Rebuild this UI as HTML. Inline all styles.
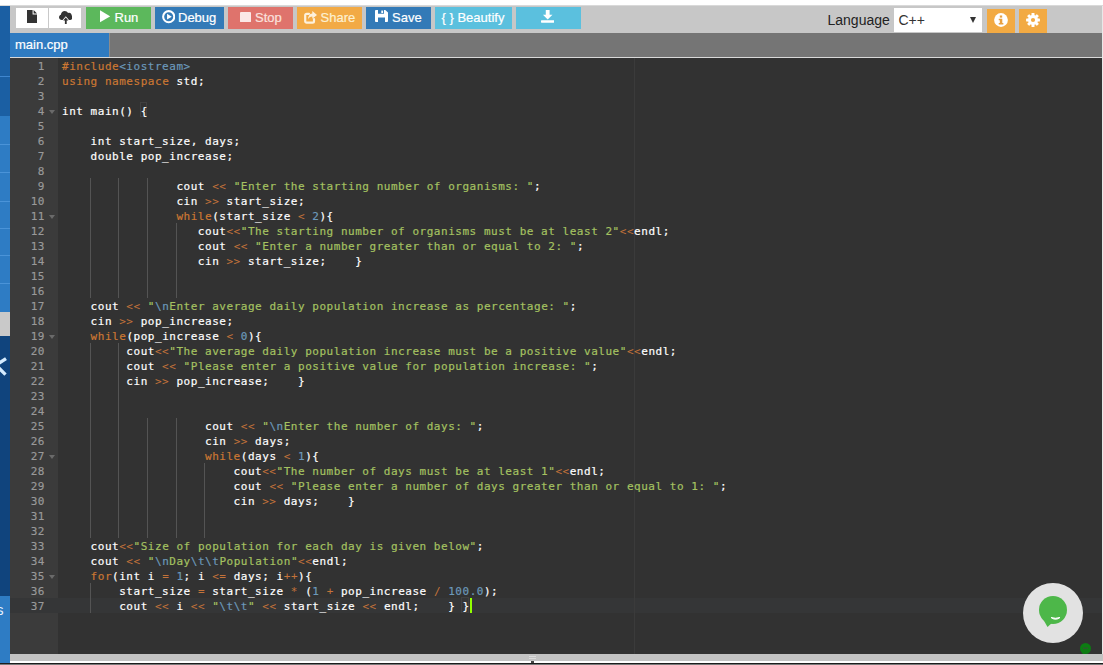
<!DOCTYPE html>
<html><head><meta charset="utf-8"><title>main.cpp</title>
<style>
html,body{margin:0;padding:0;}
body{width:1103px;height:665px;overflow:hidden;background:#fff;position:relative;font-family:"Liberation Sans",sans-serif;}
.abs{position:absolute;}
#toolbar{left:10px;top:5px;width:1092px;height:28px;background:#c7c7c7;}
#topshade{left:0;top:5px;width:1103px;height:1px;background:#d9d9d9;z-index:5;}
#side{left:0;top:6px;width:10px;height:657px;background:#1b5fa3;overflow:hidden;}
#side div{position:absolute;left:0;width:10px;}
#tabbar{left:10px;top:33px;width:1092px;height:24px;background:#757575;}
#tab{left:0;top:0;width:99px;height:24px;background:#2f7bc1;box-shadow:1px 0 0 #8c8c8c;color:#fff;font-size:13px;line-height:24px;}
#tab span{position:absolute;left:5px;top:0px;-webkit-text-stroke:0.2px;}
#tabline{left:10px;top:57px;width:1092px;height:1px;background:#d9d9d9;}
#editor{left:10px;top:58px;width:1092px;height:596px;background:#323232;overflow:hidden;}
#gutter{left:0;top:0;width:48px;height:596px;background:#3b3b3b;color:#999;}
#content{left:48px;top:0;width:1044px;height:596px;}
.mono,.ln,.gn{font-family:"DejaVu Sans Mono","Liberation Mono",monospace;font-size:11px;line-height:17px;height:15px;letter-spacing:0.528px;-webkit-text-stroke:0.18px;white-space:pre;}
.ln{color:#fff;padding-left:4px;position:relative;}
.gn{text-align:right;padding-right:13px;position:relative;}
.fold{position:absolute;right:3px;top:6.5px;width:0;height:0;border-left:3.5px solid transparent;border-right:3.5px solid transparent;border-top:4px solid #6a6a6a;}
.k{color:#CC7833}.o{color:#c4733a;-webkit-text-stroke:0}.s{color:#A5C261}.c{color:#6C99BB}
.gd{position:absolute;width:1px;background:#545454;}
#active{left:0;top:540px;width:1092px;height:15px;background:#353637;}
#pm{left:576px;top:0;width:1px;height:596px;background:#3b3b3b;}
#cursor{left:411.5px;top:540px;width:2px;height:15px;background:#91FF00;}
.btn{position:absolute;top:2px;height:22px;color:#fff;font-size:13px;line-height:22px;white-space:nowrap;-webkit-text-stroke:0.2px;}
.btn svg{position:absolute;}
.btn span{position:absolute;top:0;}
#bottomgray{left:10px;top:654px;width:1093px;height:7px;background:#c3c3c3;}
#bottomwhite{left:10px;top:661px;width:1093px;height:2px;background:#fff;}
#bottomdark{left:0;top:663px;width:1103px;height:1px;background:#1c1c1c;}
#bottomdark2{left:0;top:664px;width:1103px;height:1px;background:#7a7a7a;}
#rightedge{left:1102px;top:5px;width:1px;height:656px;background:#e8e8e8;}
</style></head><body>
<div id="topshade" class="abs"></div>
<div id="toolbar" class="abs">
  <!-- file group -->
  <div class="abs" style="left:6px;top:3px;width:65px;height:20px;background:#fff;"></div>
  <div class="abs" style="left:38px;top:3px;width:1px;height:20px;background:#c9c9c9;"></div>
  <svg class="abs" style="left:17px;top:5px" width="10" height="13" viewBox="0 0 10 13"><path d="M0 0H5.6V4.4H10V13H0Z M6.6 0L10 3.400H6.600Z" fill="#333"/></svg>
  <svg class="abs" style="left:48.7px;top:5.6px" width="13.6" height="13.2" viewBox="0 0 15 14" preserveAspectRatio="none"><path d="M3.2 9.5C1.4 9.5 0 8.2 0 6.6C0 5.3 .9 4.2 2.1 3.9C2.3 1.7 4.1 0 6.3 0C7.9 0 9.3.9 10 2.2C10.4 2 10.8 1.9 11.2 1.9C12.7 1.9 13.9 3.1 13.9 4.6C14.6 5.1 15 5.9 15 6.8C15 8.3 13.8 9.5 12.3 9.5H11L7.5 5.5L4 9.5Z" fill="#333"/><path d="M7.5 7L10.3 10.2H8.5V14H6.5V10.2H4.7Z" fill="#333"/></svg>
  <!-- Run -->
  <div class="btn" style="left:76px;width:65px;background:#5cb85c;">
    <svg style="left:13.5px;top:3.4px" width="10.6" height="12.6" viewBox="0 0 11 13"><path d="M0 .3V12.7L10.6 6.5Z" fill="#fff"/></svg>
    <span style="left:28.5px">Run</span></div>
  <!-- Debug -->
  <div class="btn" style="left:145px;width:69px;background:#337ab7;">
    <svg style="left:7px;top:3.2px" width="13.4" height="13.4" viewBox="0 0 13 13"><circle cx="6.5" cy="6.5" r="5.4" fill="none" stroke="#fff" stroke-width="2"/><path d="M4.9 3.7V9.3L9.5 6.5Z" fill="#fff"/></svg>
    <span style="left:23px">Debug</span></div>
  <!-- Stop -->
  <div class="btn" style="left:218px;width:65px;background:#df736c;color:#fbe1de;">
    <svg style="left:12px;top:5px" width="11" height="10.2" viewBox="0 0 11 11" preserveAspectRatio="none"><rect x="0" y="0" width="11" height="11" rx="1" fill="#fbe8e7"/></svg>
    <span style="left:27px">Stop</span></div>
  <!-- Share -->
  <div class="btn" style="left:287px;width:65px;background:#f2aa45;color:#fdf0d0;">
    <svg style="left:6.5px;top:4px" width="13" height="13" viewBox="0 0 13 13"><path d="M10 8.2V10.2C10 11 9.4 11.6 8.6 11.6H2.6C1.8 11.6 1.2 11 1.2 10.2V4.2C1.2 3.4 1.8 2.8 2.6 2.8H5" fill="none" stroke="#fdf1dc" stroke-width="2.2" stroke-linecap="round"/><path d="M8.3 0L13 3.9L8.3 7.8V5.4C6.3 5.4 5 6.2 4 8.4C4 5.2 5.4 2.7 8.3 2.4Z" fill="#fdf1dc"/></svg>
    <span style="left:23.5px">Share</span></div>
  <!-- Save -->
  <div class="btn" style="left:356px;width:65px;background:#337ab7;">
    <svg style="left:9px;top:3.2px" width="13" height="12" viewBox="0 0 13 13" preserveAspectRatio="none"><path d="M0 .9C0 .4 .4 0 .9 0H10.2L13 2.8V12.1C13 12.6 12.6 13 12.1 13H.9C.4 13 0 12.6 0 12.1Z M3 0V4H9V0Z M3 13V8H10V13Z" fill="#fff" fill-rule="evenodd"/><rect x="6.3" y=".6" width="1.8" height="2.7" fill="#fff"/></svg>
    <span style="left:26px">Save</span></div>
  <!-- Beautify -->
  <div class="btn" style="left:425px;width:77px;background:#5bc0de;">
    <span style="left:6.5px">{ } Beautify</span></div>
  <!-- Download -->
  <div class="btn" style="left:506px;width:65px;background:#5bc0de;">
    <svg style="left:25px;top:2.8px" width="13.4" height="13.4" viewBox="0 0 14 14"><path d="M5 0H9V5H12L7 10L2 5H5Z" fill="#fff"/><rect x="0" y="10.6" width="14" height="2.6" rx=".6" fill="#fff"/></svg>
  </div>
  <!-- Language -->
  <div class="abs" style="left:817.5px;top:4px;font-size:14px;line-height:22px;color:#222;">Language</div>
  <div class="abs" style="left:884px;top:3px;width:88px;height:24px;background:#fff;"></div>
  <div class="abs" style="left:888.5px;top:4px;font-size:14px;line-height:22px;color:#333;">C++</div>
  <div class="abs" style="left:959.5px;top:12px;width:0;height:0;border-left:3.5px solid transparent;border-right:3.5px solid transparent;border-top:6px solid #333;"></div>
  <!-- info -->
  <div class="abs" style="left:977px;top:3.5px;width:28px;height:24px;background:#f2aa43;">
    <svg class="abs" style="left:7px;top:4.5px" width="14" height="14" viewBox="0 0 13 13"><circle cx="6.5" cy="6.5" r="6.4" fill="#fff"/><rect x="5.4" y="2.3" width="2.2" height="2" fill="#e8a040"/><path d="M4.4 5.4H7.7V9.3H8.7V10.6H4.4V9.3H5.4V6.7H4.4Z" fill="#e8a040"/></svg>
  </div>
  <!-- settings -->
  <div class="abs" style="left:1009.3px;top:3.5px;width:28px;height:24px;background:#f2aa43;">
    <svg class="abs" style="left:7px;top:4.5px" width="14" height="14" viewBox="-7 -7 14 14">
      <g fill="#fff"><circle r="4.9"/>
      <g id="t"><rect x="-1.5" y="-6.9" width="3" height="13.8" rx=".5"/></g>
      <rect x="-1.5" y="-6.9" width="3" height="13.8" rx=".5" transform="rotate(45)"/>
      <rect x="-1.5" y="-6.9" width="3" height="13.8" rx=".5" transform="rotate(90)"/>
      <rect x="-1.5" y="-6.9" width="3" height="13.8" rx=".5" transform="rotate(135)"/></g>
      <circle r="2.1" fill="#f2aa43"/>
    </svg>
  </div>
</div>
<div id="tabbar" class="abs"><div id="tab" class="abs"><span>main.cpp</span></div></div>
<div id="tabline" class="abs"></div>
<div id="editor" class="abs">
  <div id="active" class="abs"></div>
  <div id="gutter" class="abs">
<div class="abs" style="left:0;top:540px;width:48px;height:15px;background:#353637"></div>
<div class="gn">1</div>
<div class="gn">2</div>
<div class="gn">3</div>
<div class="gn">4<i class="fold"></i></div>
<div class="gn">5</div>
<div class="gn">6</div>
<div class="gn">7</div>
<div class="gn">8</div>
<div class="gn">9</div>
<div class="gn">10</div>
<div class="gn">11<i class="fold"></i></div>
<div class="gn">12</div>
<div class="gn">13</div>
<div class="gn">14</div>
<div class="gn">15</div>
<div class="gn">16</div>
<div class="gn">17</div>
<div class="gn">18</div>
<div class="gn">19<i class="fold"></i></div>
<div class="gn">20</div>
<div class="gn">21</div>
<div class="gn">22</div>
<div class="gn">23</div>
<div class="gn">24</div>
<div class="gn">25</div>
<div class="gn">26</div>
<div class="gn">27<i class="fold"></i></div>
<div class="gn">28</div>
<div class="gn">29</div>
<div class="gn">30</div>
<div class="gn">31</div>
<div class="gn">32</div>
<div class="gn">33</div>
<div class="gn">34</div>
<div class="gn">35<i class="fold"></i></div>
<div class="gn">36</div>
<div class="gn">37</div>
  </div>
  <div id="content" class="abs">
    <div id="pm" class="abs"></div>
<div class="abs" style="left:81.65px;top:44px;width:7px;height:15px;border:1px solid #404040;box-sizing:border-box"></div>
<div class="abs" style="left:403.4px;top:539px;width:8px;height:16px;border:1px solid #404040;box-sizing:border-box"></div>
<div class="gd" style="left:32px;top:120px;height:120px"></div>
<div class="gd" style="left:32px;top:285px;height:195px"></div>
<div class="gd" style="left:32px;top:525px;height:30px"></div>
<div class="gd" style="left:60px;top:120px;height:120px"></div>
<div class="gd" style="left:60px;top:285px;height:195px"></div>
<div class="gd" style="left:89px;top:120px;height:120px"></div>
<div class="gd" style="left:89px;top:360px;height:120px"></div>
<div class="gd" style="left:118px;top:165px;height:75px"></div>
<div class="gd" style="left:118px;top:360px;height:120px"></div>
<div class="gd" style="left:146px;top:405px;height:75px"></div>
<div class="ln"><span class="k">#include</span><span class="c">&lt;iostream&gt;</span></div>
<div class="ln"><span class="k">using</span> <span class="k">namespace</span> std;</div>
<div class="ln"></div>
<div class="ln">int main() {</div>
<div class="ln"></div>
<div class="ln">    int start_size, days;</div>
<div class="ln">    double pop_increase;</div>
<div class="ln"></div>
<div class="ln">                cout <span class="o">&lt;&lt;</span> <span class="s">"Enter the starting number of organisms: "</span>;</div>
<div class="ln">                cin <span class="o">&gt;&gt;</span> start_size;</div>
<div class="ln">                <span class="k">while</span>(start_size <span class="o">&lt;</span> <span class="c">2</span>){</div>
<div class="ln">                   cout<span class="o">&lt;&lt;</span><span class="s">"The starting number of organisms must be at least 2"</span><span class="o">&lt;&lt;</span>endl;</div>
<div class="ln">                   cout <span class="o">&lt;&lt;</span> <span class="s">"Enter a number greater than or equal to 2: "</span>;</div>
<div class="ln">                   cin <span class="o">&gt;&gt;</span> start_size;    }</div>
<div class="ln"></div>
<div class="ln"></div>
<div class="ln">    cout <span class="o">&lt;&lt;</span> <span class="s">"<span class="c">\n</span>Enter average daily population increase as percentage: "</span>;</div>
<div class="ln">    cin <span class="o">&gt;&gt;</span> pop_increase;</div>
<div class="ln">    <span class="k">while</span>(pop_increase <span class="o">&lt;</span> <span class="c">0</span>){</div>
<div class="ln">         cout<span class="o">&lt;&lt;</span><span class="s">"The average daily population increase must be a positive value"</span><span class="o">&lt;&lt;</span>endl;</div>
<div class="ln">         cout <span class="o">&lt;&lt;</span> <span class="s">"Please enter a positive value for population increase: "</span>;</div>
<div class="ln">         cin <span class="o">&gt;&gt;</span> pop_increase;    }</div>
<div class="ln"></div>
<div class="ln"></div>
<div class="ln">                    cout <span class="o">&lt;&lt;</span> <span class="s">"<span class="c">\n</span>Enter the number of days: "</span>;</div>
<div class="ln">                    cin <span class="o">&gt;&gt;</span> days;</div>
<div class="ln">                    <span class="k">while</span>(days <span class="o">&lt;</span> <span class="c">1</span>){</div>
<div class="ln">                        cout<span class="o">&lt;&lt;</span><span class="s">"The number of days must be at least 1"</span><span class="o">&lt;&lt;</span>endl;</div>
<div class="ln">                        cout <span class="o">&lt;&lt;</span> <span class="s">"Please enter a number of days greater than or equal to 1: "</span>;</div>
<div class="ln">                        cin <span class="o">&gt;&gt;</span> days;    }</div>
<div class="ln"></div>
<div class="ln"></div>
<div class="ln">    cout<span class="o">&lt;&lt;</span><span class="s">"Size of population for each day is given below"</span>;</div>
<div class="ln">    cout <span class="o">&lt;&lt;</span> <span class="s">"<span class="c">\n</span>Day<span class="c">\t</span><span class="c">\t</span>Population"</span><span class="o">&lt;&lt;</span>endl;</div>
<div class="ln">    <span class="k">for</span>(int i <span class="o">=</span> <span class="c">1</span>; i <span class="o">&lt;=</span> days; i<span class="o">++</span>){</div>
<div class="ln">        start_size <span class="o">=</span> start_size <span class="o">*</span> (<span class="c">1</span> <span class="o">+</span> pop_increase <span class="o">/</span> <span class="c">100.0</span>);</div>
<div class="ln">        cout <span class="o">&lt;&lt;</span> i <span class="o">&lt;&lt;</span> <span class="s">"<span class="c">\t</span><span class="c">\t</span>"</span> <span class="o">&lt;&lt;</span> start_size <span class="o">&lt;&lt;</span> endl;    } }</div>
    <div id="cursor" class="abs"></div>
  </div>
  <!-- chat widget -->
  <div class="abs" style="left:1013px;top:525px;width:60px;height:60px;border-radius:50%;background:#e2e2e2;"></div>
  <svg class="abs" style="left:1028px;top:537px" width="30" height="33" viewBox="0 0 30 33"><circle cx="15" cy="15" r="14" fill="#4db749"/><path d="M5 24L9.5 32L15 27Z" fill="#4db749"/><path d="M13 22.5Q17.500 26 22 22.500Q17.500 24 13 22.500Z" fill="#fff" stroke="#fff" stroke-width="1"/></svg>
  <svg class="abs" style="left:1069px;top:585px" width="13" height="12" viewBox="0 0 13 12"><circle cx="6.500" cy="5.500" r="5.500" fill="#0c7c12"/><path d="M3 9L4 12L7 10Z" fill="#0c7c12"/><rect x="4" y="4.500" width="5" height="1.500" fill="#2d5a2d"/></svg>
</div>
<div id="side" class="abs">
  <div style="top:70px;height:1px;background:#3f86cf"></div>
  <div style="top:110px;height:196px;background:#2e7cc4"></div>
  <div style="top:138px;height:1px;background:#4a93d8"></div>
  <div style="top:166px;height:1px;background:#4a93d8"></div>
  <div style="top:195px;height:1px;background:#4a93d8"></div>
  <div style="top:222px;height:1px;background:#4a93d8"></div>
  <div style="top:249px;height:1px;background:#4a93d8"></div>
  <div style="top:277px;height:1px;background:#4a93d8"></div>
  <div style="top:306px;height:24px;background:#c9c9c9"></div>
  <div style="top:330px;height:260px;background:#10447d"></div>
  <svg style="position:absolute;left:0;top:348px" width="10" height="24" viewBox="0 0 10 24"><path d="M6 4.600L-1.500 9.600M-1.500 13.600L5.500 20.600" stroke="#d5ecff" stroke-width="3.300" fill="none"/></svg>
  <div style="top:590px;height:67px;background:#2e7cc4"></div>
  <div style="top:594px;left:-3.5px;width:12px;color:#e8f2ff;font-size:14px;line-height:20px;">s</div>
</div>
<div id="rightedge" class="abs"></div>
<div id="bottomgray" class="abs"></div>
<div id="bottomwhite" class="abs"></div>
<div class="abs" style="left:529px;top:656px;width:7px;height:1px;background:#dcdcdc"></div><div class="abs" style="left:529px;top:658px;width:7px;height:1px;background:#dcdcdc"></div><div class="abs" style="left:531px;top:661px;width:3px;height:2px;background:#444"></div>
<div id="bottomdark" class="abs"></div>
<div id="bottomdark2" class="abs"></div>
</body></html>
